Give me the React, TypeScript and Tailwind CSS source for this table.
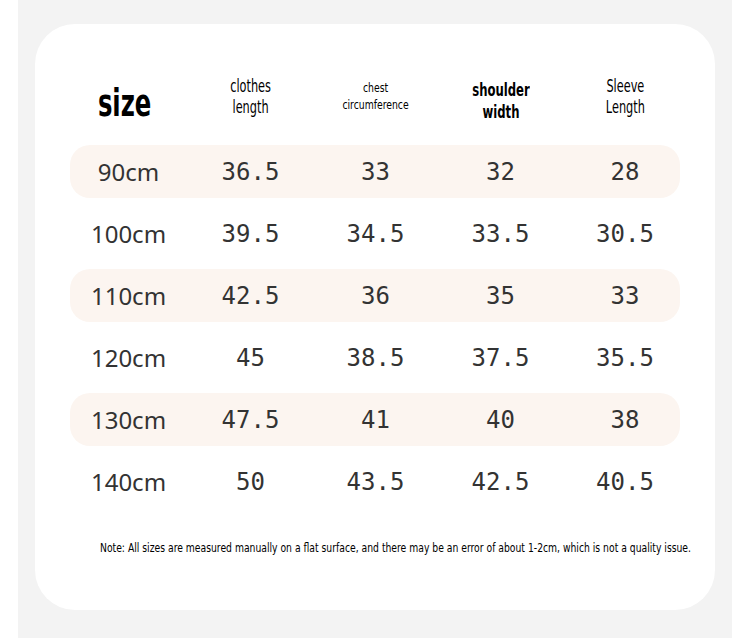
import React from "react";

const rows = [
  ["90cm", "36.5", "33", "32", "28"],
  ["100cm", "39.5", "34.5", "33.5", "30.5"],
  ["110cm", "42.5", "36", "35", "33"],
  ["120cm", "45", "38.5", "37.5", "35.5"],
  ["130cm", "47.5", "41", "40", "38"],
  ["140cm", "50", "43.5", "42.5", "40.5"],
];

const cond = { fontFamily: '"DejaVu Sans Condensed", sans-serif' };

export default function App() {
  return (
    <div className="w-[750px] h-[638px] bg-white overflow-hidden">
      <div className="mx-[18px] h-full bg-[#f3f3f3] pt-[24px]">
        <div className="ml-[17px] w-[680px] h-[586px] bg-white rounded-[40px] flex flex-col">
          <div
            className="ml-[35px] mt-[46px] h-[60px] w-[610px] grid grid-cols-[118px_125px_125px_125px_117px] items-center text-black text-center"
            style={cond}
          >
            <div className="pr-[8px] flex justify-center mt-[6px]">
              <span className="text-[37px] font-bold scale-x-[0.73] inline-block leading-none">size</span>
            </div>
            <div className="flex justify-center -mt-[6px]">
              <span className="inline-block text-[17px] leading-[21px] scale-x-[0.74]">clothes<br />length</span>
            </div>
            <div className="flex justify-center -mt-[6px]">
              <span className="inline-block text-[12px] leading-[17px] scale-x-[0.86]">chest<br />circumference</span>
            </div>
            <div className="flex justify-center mt-[2px]">
              <span className="inline-block text-[18px] leading-[22px] font-bold scale-x-[0.72]">shoulder<br />width</span>
            </div>
            <div className="pl-[7px] flex justify-center -mt-[6px]">
              <span className="inline-block text-[17px] leading-[21px] scale-x-[0.74]">Sleeve<br />Length</span>
            </div>
          </div>
          <div className="mt-[15px] flex flex-col gap-[9px]">
            {rows.map((r, i) => (
              <div
                key={i}
                className={`ml-[35px] w-[610px] h-[53px] rounded-[20px] grid grid-cols-[118px_125px_125px_125px_117px] items-center text-center text-[#333] ${i % 2 === 0 ? "bg-[#fcf5f0]" : ""}`}
              >
                <div className="pr-[1px] text-[24px]" style={{ fontFamily: '"Noto Sans", sans-serif' }}>{r[0]}</div>
                {r.slice(1).map((v, j) => (
                  <div
                    key={j}
                    className={`text-[24px] ${j === 3 ? "pl-[7px]" : ""}`}
                    style={{ fontFamily: '"DejaVu Sans Mono", monospace' }}
                  >
                    {v}
                  </div>
                ))}
              </div>
            ))}
          </div>
          <div className="mt-[30px] ml-[65px] text-[13px] text-black whitespace-nowrap scale-x-[0.79] origin-left" style={cond}>
            Note: All sizes are measured manually on a flat surface, and there may be an error of about 1-2cm, which is not a quality issue.
          </div>
        </div>
      </div>
    </div>
  );
}
